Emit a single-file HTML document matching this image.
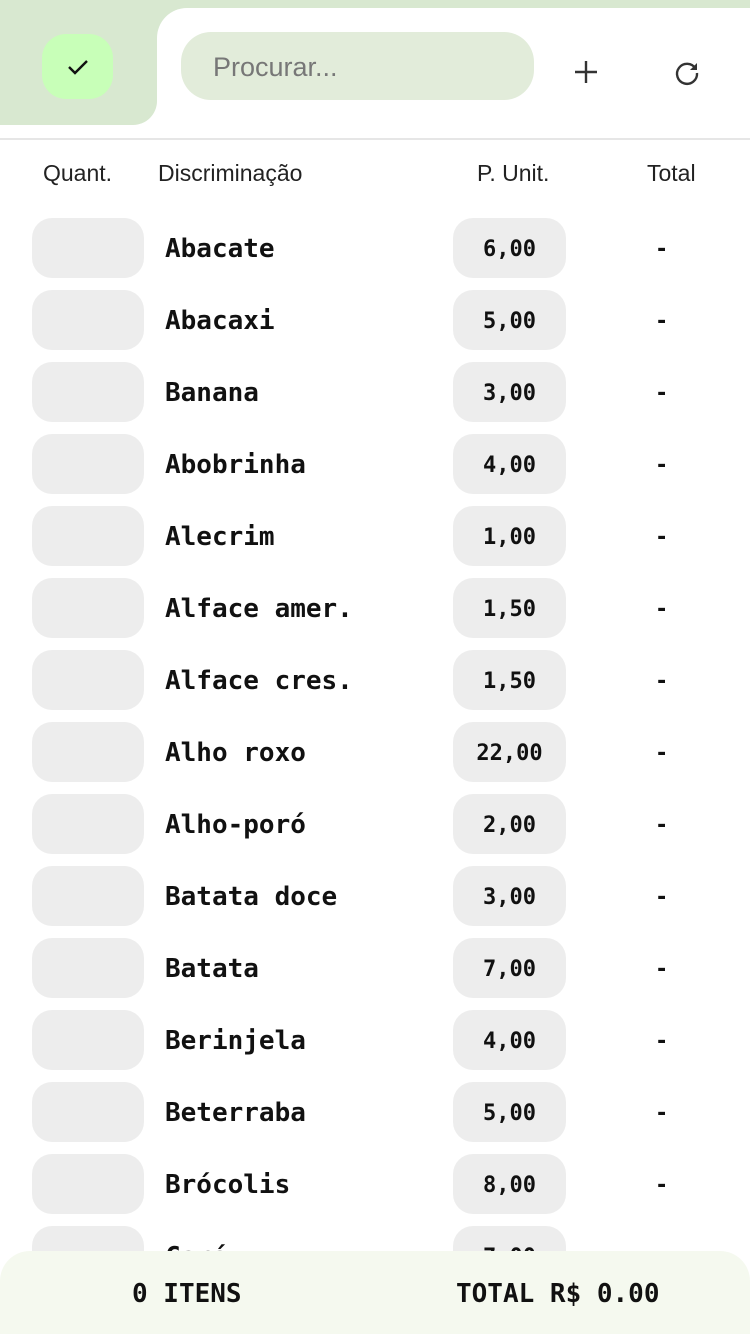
<!DOCTYPE html>
<html><head><meta charset="utf-8"><style>
*{margin:0;padding:0;box-sizing:border-box}
body{width:750px;height:1334px;overflow:hidden;background:#fff;position:relative;font-family:"Liberation Sans",Arial,sans-serif}
.topbg{position:absolute;left:0;top:0;width:750px;height:8px;background:#d8e8d0}
.cornerbg{position:absolute;left:150px;top:0;width:50px;height:50px;background:#d8e8d0}
.panel{position:absolute;left:157px;top:8px;width:593px;height:131px;background:#fff;border-top-left-radius:30px}
.leftbox{position:absolute;left:0;top:8px;width:157px;height:117px;background:#d8e8d0;border-bottom-right-radius:24px}
.check{position:absolute;left:42px;top:34px;width:71px;height:65px;background:#c8ffb8;border-radius:24px}
.search{position:absolute;left:181px;top:32px;width:353px;height:68px;background:#e2ecda;border-radius:30px;color:#777;font-size:27px;padding:20px 0 0 32px}
.line{position:absolute;left:0;top:138px;width:750px;height:2px;background:#e6e6e6}
.hdr{position:absolute;top:160px;font-size:23px;color:#222}
.row{position:absolute;left:0;width:750px;height:60px}
.q{position:absolute;left:32px;top:0;width:112px;height:60px;background:#ededed;border-radius:20px}
.p{position:absolute;left:453px;top:0;width:113px;height:60px;background:#ededed;border-radius:20px;text-align:center;line-height:64px;font-family:"DejaVu Sans Mono",monospace;font-weight:bold;font-size:22px;color:#111}
.n{position:absolute;left:165px;top:0;line-height:62px;font-family:"DejaVu Sans Mono",monospace;font-weight:bold;font-size:26px;color:#111}
.t{position:absolute;left:655px;top:0;line-height:64px;font-family:"DejaVu Sans Mono",monospace;font-weight:bold;font-size:22px;color:#111}
.foot{position:absolute;left:0;top:1251px;width:750px;height:83px;background:#f5f9ef;border-radius:30px 30px 0 0;font-family:"DejaVu Sans Mono",monospace;font-weight:bold;font-size:26px;color:#111}
</style></head><body>
<div class="topbg"></div>
<div class="cornerbg"></div>
<div class="panel"></div>
<div class="leftbox"></div>
<div class="check"><svg width="71" height="65" viewBox="0 0 71 65"><path d="M27 33 L33 39 L45 27" fill="none" stroke="#111" stroke-width="2.4"/></svg></div>
<div class="search">Procurar...</div>
<svg style="position:absolute;left:572px;top:58px" width="28" height="28" viewBox="0 0 28 28"><path d="M14 3V25M3 14H25" stroke="#333" stroke-width="2.4"/></svg>
<svg style="position:absolute;left:673px;top:59px" width="28" height="28" viewBox="0 0 28 28"><path d="M22.5 9.5 A10 10 0 1 0 24 14" fill="none" stroke="#333" stroke-width="2.4"/><path d="M24 4 L24 11 L17 11 Z" fill="#333"/></svg>
<div class="line"></div>
<div class="hdr" style="left:43px">Quant.</div>
<div class="hdr" style="left:158px">Discriminação</div>
<div class="hdr" style="left:477px">P. Unit.</div>
<div class="hdr" style="left:647px">Total</div>

<div class="row" style="top:218px"><div class="q"></div><div class="n">Abacate</div><div class="p">6,00</div><div class="t">-</div></div>
<div class="row" style="top:290px"><div class="q"></div><div class="n">Abacaxi</div><div class="p">5,00</div><div class="t">-</div></div>
<div class="row" style="top:362px"><div class="q"></div><div class="n">Banana</div><div class="p">3,00</div><div class="t">-</div></div>
<div class="row" style="top:434px"><div class="q"></div><div class="n">Abobrinha</div><div class="p">4,00</div><div class="t">-</div></div>
<div class="row" style="top:506px"><div class="q"></div><div class="n">Alecrim</div><div class="p">1,00</div><div class="t">-</div></div>
<div class="row" style="top:578px"><div class="q"></div><div class="n">Alface amer.</div><div class="p">1,50</div><div class="t">-</div></div>
<div class="row" style="top:650px"><div class="q"></div><div class="n">Alface cres.</div><div class="p">1,50</div><div class="t">-</div></div>
<div class="row" style="top:722px"><div class="q"></div><div class="n">Alho roxo</div><div class="p">22,00</div><div class="t">-</div></div>
<div class="row" style="top:794px"><div class="q"></div><div class="n">Alho-poró</div><div class="p">2,00</div><div class="t">-</div></div>
<div class="row" style="top:866px"><div class="q"></div><div class="n">Batata doce</div><div class="p">3,00</div><div class="t">-</div></div>
<div class="row" style="top:938px"><div class="q"></div><div class="n">Batata</div><div class="p">7,00</div><div class="t">-</div></div>
<div class="row" style="top:1010px"><div class="q"></div><div class="n">Berinjela</div><div class="p">4,00</div><div class="t">-</div></div>
<div class="row" style="top:1082px"><div class="q"></div><div class="n">Beterraba</div><div class="p">5,00</div><div class="t">-</div></div>
<div class="row" style="top:1154px"><div class="q"></div><div class="n">Brócolis</div><div class="p">8,00</div><div class="t">-</div></div>
<div class="row" style="top:1226px"><div class="q"></div><div class="n">Cará</div><div class="p">7,00</div><div class="t">-</div></div>

<div class="foot"><span style="position:absolute;left:132px;top:28px">0 ITENS</span><span style="position:absolute;left:456px;top:28px">TOTAL R$ 0.00</span></div>
</body></html>
